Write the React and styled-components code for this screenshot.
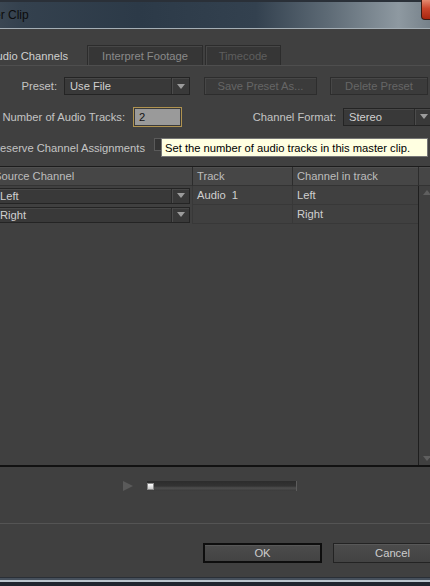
import React from 'react'
import styled, { createGlobalStyle } from 'styled-components'

const GlobalStyle = createGlobalStyle`
  html, body {
    margin: 0;
    padding: 0;
    background: #404040;
    overflow: hidden;
  }
  body {
    width: 430px;
    height: 586px;
    font-family: "Liberation Sans", Arial, sans-serif;
  }
`;

const Window = styled.div`
  width: 510px;
  height: 586px;
  margin-left: -40px;
  display: flex;
  flex-direction: column;
  background: #404040;
  color: #c6c6c6;
  font-size: 11.2px;
`;

const TitleBar = styled.div`
  height: 26px;
  border-top: 2px solid #2a3038;
  border-bottom: 1px solid #a4aeb5;
  display: flex;
  justify-content: space-between;
  align-items: flex-start;
  background: linear-gradient(90deg, #46515c 0%, #34414e 12%, #2c3a48 35%, #33414f 58%, #5d6a75 72%, #8e99a1 86%, #6f7a83 94%, #56616b 100%);
`;

const TitleText = styled.span`
  padding-left: 8px;
  line-height: 26px;
  font-size: 12px;
  color: #0c0c0c;
`;

const CloseButton = styled.div`
  width: 43px;
  height: 20px;
  margin-top: -2px;
  margin-right: 6px;
  box-sizing: border-box;
  border: 1px solid #3a1a12;
  border-top: none;
  border-radius: 0 0 4px 4px;
  background: linear-gradient(180deg, #e48a70 0%, #c9452b 45%, #a8260f 100%);
`;

const TabBar = styled.div`
  display: flex;
  gap: 2px;
  padding-left: 12px;
  margin-top: 16px;
  height: 20px;
`;

const Tab = styled.div`
  width: ${p => p.$w}px;
  height: 20px;
  box-sizing: border-box;
  display: flex;
  align-items: center;
  justify-content: center;
  color: ${p => (p.$active ? '#cfcfcf' : p.$disabled ? '#5e5e5e' : '#8a8a8a')};
  background: ${p => (p.$active ? '#404040' : '#363636')};
  border: 1px solid ${p => (p.$active ? '#404040' : '#2c2c2c')};
  border-bottom: none;
  box-shadow: ${p => (p.$active ? 'none' : 'inset 1px 1px 0 #474747')};
`;

const Panel = styled.div`
  flex: 1;
  display: flex;
  flex-direction: column;
  border-top: 1px solid #4e4e4e;
  padding-top: 11px;
`;

const FormRow = styled.div`
  position: relative;
  display: flex;
  align-items: center;
  height: ${p => p.$h}px;
  margin-top: ${p => p.$mt || 0}px;
`;

const Label = styled.span`
  width: ${p => p.$w}px;
  flex-shrink: 0;
  text-align: right;
  white-space: nowrap;
  margin-right: ${p => p.$gap}px;
  color: #c4c4c4;
`;

const Select = styled.div`
  display: flex;
  width: ${p => p.$w}px;
  height: ${p => p.$h || 18}px;
  flex-shrink: 0;
  box-sizing: border-box;
  background: #393939;
  border: 1px solid #242424;
  box-shadow: inset 0 1px 0 #474747;
  color: #d0d0d0;
`;

const SelectValue = styled.span`
  flex: 1;
  display: flex;
  align-items: center;
  padding-left: 5px;
  white-space: nowrap;
`;

const SelectArrow = styled.span`
  width: 17px;
  display: flex;
  align-items: center;
  justify-content: center;
  border-left: 1px solid #2a2a2a;
  box-shadow: inset 1px 0 0 #4c4c4c;

  &::after {
    content: '';
    border-left: 4px solid transparent;
    border-right: 4px solid transparent;
    border-top: 5px solid #9c9c9c;
  }
`;

const DisabledButton = styled.div`
  width: ${p => p.$w}px;
  height: 18px;
  margin-left: ${p => p.$ml}px;
  flex-shrink: 0;
  box-sizing: border-box;
  display: flex;
  align-items: center;
  justify-content: center;
  background: #3b3b3b;
  border: 1px solid #2d2d2d;
  box-shadow: inset 1px 1px 0 #474747;
  color: #666666;
  white-space: nowrap;
`;

const NumberInput = styled.div`
  width: 49px;
  height: 20px;
  flex-shrink: 0;
  box-sizing: border-box;
  border: 1px solid #b09350;
  box-shadow: inset 0 0 0 1px #3a3a3a;
  background: #9a9a9a;
  color: #141414;
  display: flex;
  align-items: center;
  padding-left: 5px;
`;

const Checkbox = styled.span`
  width: 13px;
  height: 13px;
  margin-top: -6px;
  box-sizing: border-box;
  border: 1px solid #5a5a5a;
  background: #343434;
`;

const Tooltip = styled.div`
  position: absolute;
  left: 201px;
  top: 0;
  width: 267px;
  height: 19px;
  box-sizing: border-box;
  background: #ffffe1;
  border: 1px solid #767676;
  color: #000;
  display: flex;
  align-items: center;
  padding-left: 3px;
  white-space: nowrap;
`;

const Table = styled.div`
  display: grid;
  grid-template-columns: 202px 100px 126px 16px;
  grid-template-rows: 19px 19px 19px 1fr;
  margin-top: 9px;
  margin-left: 30px;
  height: 298px;
  border-top: 1px solid #1c1c1c;
  border-bottom: 2px solid #121212;
`;

const HeaderCell = styled.div`
  display: flex;
  align-items: center;
  padding-left: 4px;
  background: #464646;
  border-bottom: 1px solid #333;
  border-left: ${p => (p.$first ? 'none' : '1px solid #2c2c2c')};
  box-shadow: inset 0 1px 0 #4f4f4f;
  color: #bdbdbd;
  white-space: nowrap;
`;

const SourceCell = styled.div`
  display: flex;
  align-items: center;
  padding: 0 2px 0 4px;
`;

const Cell = styled.div`
  display: flex;
  align-items: center;
  padding-left: 4px;
  border-left: 1px solid #383838;
  border-bottom: 1px solid #383838;
  color: #cfcfcf;
  white-space: pre;
`;

const Filler = styled.div`
  grid-column: 1 / 4;
`;

const Scrollbar = styled.div`
  grid-column: 4;
  grid-row: 2 / 5;
  border-left: 1px solid #1e1e1e;
  display: flex;
  flex-direction: column;
  justify-content: space-between;
  align-items: flex-start;
  padding: 4px 0 4px 4px;
`;

const ScrollArrow = styled.span`
  border-left: 4px solid transparent;
  border-right: 4px solid transparent;
  ${p => (p.$down ? 'border-top: 5px solid #5f5f5f;' : 'border-bottom: 5px solid #5f5f5f;')}
`;

const PlayerRow = styled.div`
  display: flex;
  justify-content: center;
  align-items: center;
  gap: 14px;
  height: 10px;
  margin-top: 14px;
  padding-right: 10px;
`;

const Slider = styled.div`
  width: 150px;
  height: 10px;
  box-sizing: border-box;
  display: flex;
  align-items: center;
  background: linear-gradient(180deg, #2c2c2c 0%, #333 50%, #4e4e4e 70%, #3a3a3a 100%);
  border-right: 1px solid #5c5c5c;
`;

const Thumb = styled.span`
  width: 7px;
  height: 7px;
  box-sizing: border-box;
  border: 1px solid #8a8a8a;
  background: linear-gradient(180deg, #ffffff, #c8c8c8);
`;

const Separator = styled.div`
  margin-top: 32px;
  border-top: 1px solid #545454;
`;

const ButtonRow = styled.div`
  display: flex;
  justify-content: flex-end;
  gap: 11px;
  margin-top: 19px;
  padding-right: 18px;
  height: 20px;
`;

const DialogButton = styled.div`
  width: 119px;
  height: 20px;
  box-sizing: border-box;
  display: flex;
  align-items: center;
  justify-content: center;
  background: linear-gradient(180deg, #4c4c4c, #434343);
  border: ${p => (p.$default ? '2px solid #0e0e0e' : '1px solid #232323')};
  box-shadow: inset 0 1px 0 #585858;
  color: #cdcdcd;
`;

const Frame = styled.div`
  margin-top: auto;
  height: 9px;
  background: linear-gradient(180deg, #2a2f36 0, #2a2f36 1px, #46505c 1px, #46505c 3px, #bcc6ce 3px, #bcc6ce 5px, #1f252e 5px);
`;

const PlayIcon = () => (
  <svg width="10" height="10" viewBox="0 0 10 10">
    <polygon points="0,0 10,5 0,10" fill="#5a5a5a" />
  </svg>
)

const DropDown = ({ value, width, height }) => (
  <Select $w={width} $h={height}>
    <SelectValue>{value}</SelectValue>
    <SelectArrow />
  </Select>
)

const App = () => (
  <Window>
    <GlobalStyle />
    <TitleBar>
      <TitleText>Master Clip</TitleText>
      <CloseButton />
    </TitleBar>

    <TabBar>
      <Tab $w={113} $active>Audio Channels</Tab>
      <Tab $w={116}>Interpret Footage</Tab>
      <Tab $w={76} $disabled>Timecode</Tab>
    </TabBar>

    <Panel>
      <FormRow $h={18}>
        <Label $w={97} $gap={7}>Preset:</Label>
        <DropDown value="Use File" width={126} />
        <DisabledButton $w={113} $ml={14}>Save Preset As...</DisabledButton>
        <DisabledButton $w={98} $ml={13}>Delete Preset</DisabledButton>
      </FormRow>

      <FormRow $h={19} $mt={12}>
        <Label $w={165} $gap={8}>Number of Audio Tracks:</Label>
        <NumberInput>2</NumberInput>
        <Label $w={154} $gap={7}>Channel Format:</Label>
        <DropDown value="Stereo" width={90} />
      </FormRow>

      <FormRow $h={19} $mt={12}>
        <Label $w={185} $gap={9}>Preserve Channel Assignments</Label>
        <Checkbox />
        <Tooltip>Set the number of audio tracks in this master clip.</Tooltip>
      </FormRow>

      <Table>
        <HeaderCell $first>Source Channel</HeaderCell>
        <HeaderCell>Track</HeaderCell>
        <HeaderCell>Channel in track</HeaderCell>
        <HeaderCell />

        <SourceCell><DropDown value="Left" width={196} height={16} /></SourceCell>
        <Cell>Audio  1</Cell>
        <Cell>Left</Cell>
        <Scrollbar>
          <ScrollArrow />
          <ScrollArrow $down />
        </Scrollbar>

        <SourceCell><DropDown value="Right" width={196} height={16} /></SourceCell>
        <Cell />
        <Cell>Right</Cell>

        <Filler />
      </Table>

      <PlayerRow>
        <PlayIcon />
        <Slider><Thumb /></Slider>
      </PlayerRow>

      <Separator />

      <ButtonRow>
        <DialogButton $default>OK</DialogButton>
        <DialogButton>Cancel</DialogButton>
      </ButtonRow>

      <Frame />
    </Panel>
  </Window>
)

export default App
